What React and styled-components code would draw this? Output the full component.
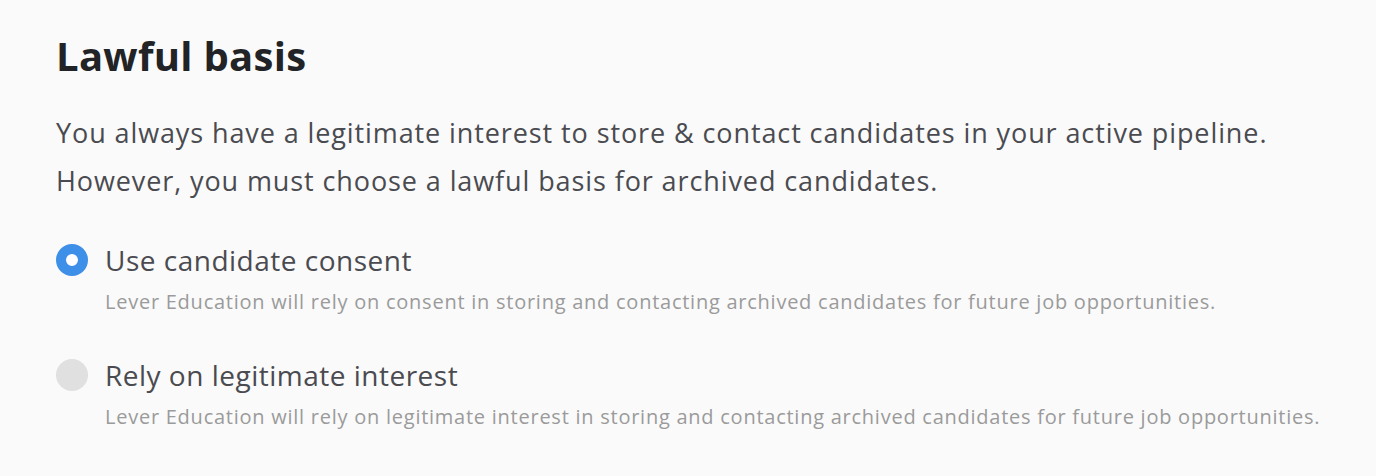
import React, { useState } from "react";
import styled, { createGlobalStyle } from "styled-components";

const GlobalStyle = createGlobalStyle`
  html, body {
    margin: 0;
    padding: 0;
    background: #fafafa;
  }
  body {
    font-family: "Open Sans", Lato, sans-serif;
    -webkit-font-smoothing: antialiased;
  }
`;

const Page = styled.div`
  padding: 28px 40px 0 56px;
  color: #4a4b50;
`;

const Heading = styled.h2`
  margin: 0;
  font-size: 40px;
  font-weight: 700;
  line-height: 56px;
  letter-spacing: 0.3px;
  color: #222326;
`;

const Intro = styled.p`
  margin: 25px 0 0 0;
  font-size: 27px;
  line-height: 48px;
  letter-spacing: 0.9px;
  color: #4a4b50;
`;

const Options = styled.div`
  display: flex;
  flex-direction: column;
  gap: 38px;
  margin-top: 35px;
`;

const Option = styled.label`
  display: grid;
  grid-template-columns: 32px 1fr;
  column-gap: 17px;
  cursor: pointer;
`;

const Dot = styled.span`
  width: 32px;
  height: 32px;
  margin-top: 4px;
  border-radius: 50%;
  box-sizing: border-box;
  background: ${(p) => (p.checked ? "#fff" : "#e0e0e0")};
  border: ${(p) => (p.checked ? "10px solid #3d8fe8" : "none")};
`;

const Label = styled.div`
  font-size: 28px;
  line-height: 40px;
  letter-spacing: 0.5px;
  color: #4a4b50;
`;

const Description = styled.div`
  grid-column: 2;
  margin-top: 7px;
  font-size: 20px;
  line-height: 30px;
  letter-spacing: 0.75px;
  white-space: nowrap;
  color: #9b9b9b;
`;

const options = [
  {
    id: "consent",
    label: "Use candidate consent",
    text:
      "Lever Education will rely on consent in storing and contacting archived candidates for future job opportunities.",
  },
  {
    id: "interest",
    label: "Rely on legitimate interest",
    text:
      "Lever Education will rely on legitimate interest in storing and contacting archived candidates for future job opportunities.",
  },
];

export default function App() {
  const [basis, setBasis] = useState("consent");
  return (
    <Page>
      <GlobalStyle />
      <Heading>Lawful basis</Heading>
      <Intro>
        You always have a legitimate interest to store &amp; contact candidates in your active pipeline.
        <br />
        However, you must choose a lawful basis for archived candidates.
      </Intro>
      <Options>
        {options.map((o) => (
          <Option key={o.id} onClick={() => setBasis(o.id)}>
            <Dot checked={basis === o.id} />
            <Label>{o.label}</Label>
            <Description>{o.text}</Description>
          </Option>
        ))}
      </Options>
    </Page>
  );
}
